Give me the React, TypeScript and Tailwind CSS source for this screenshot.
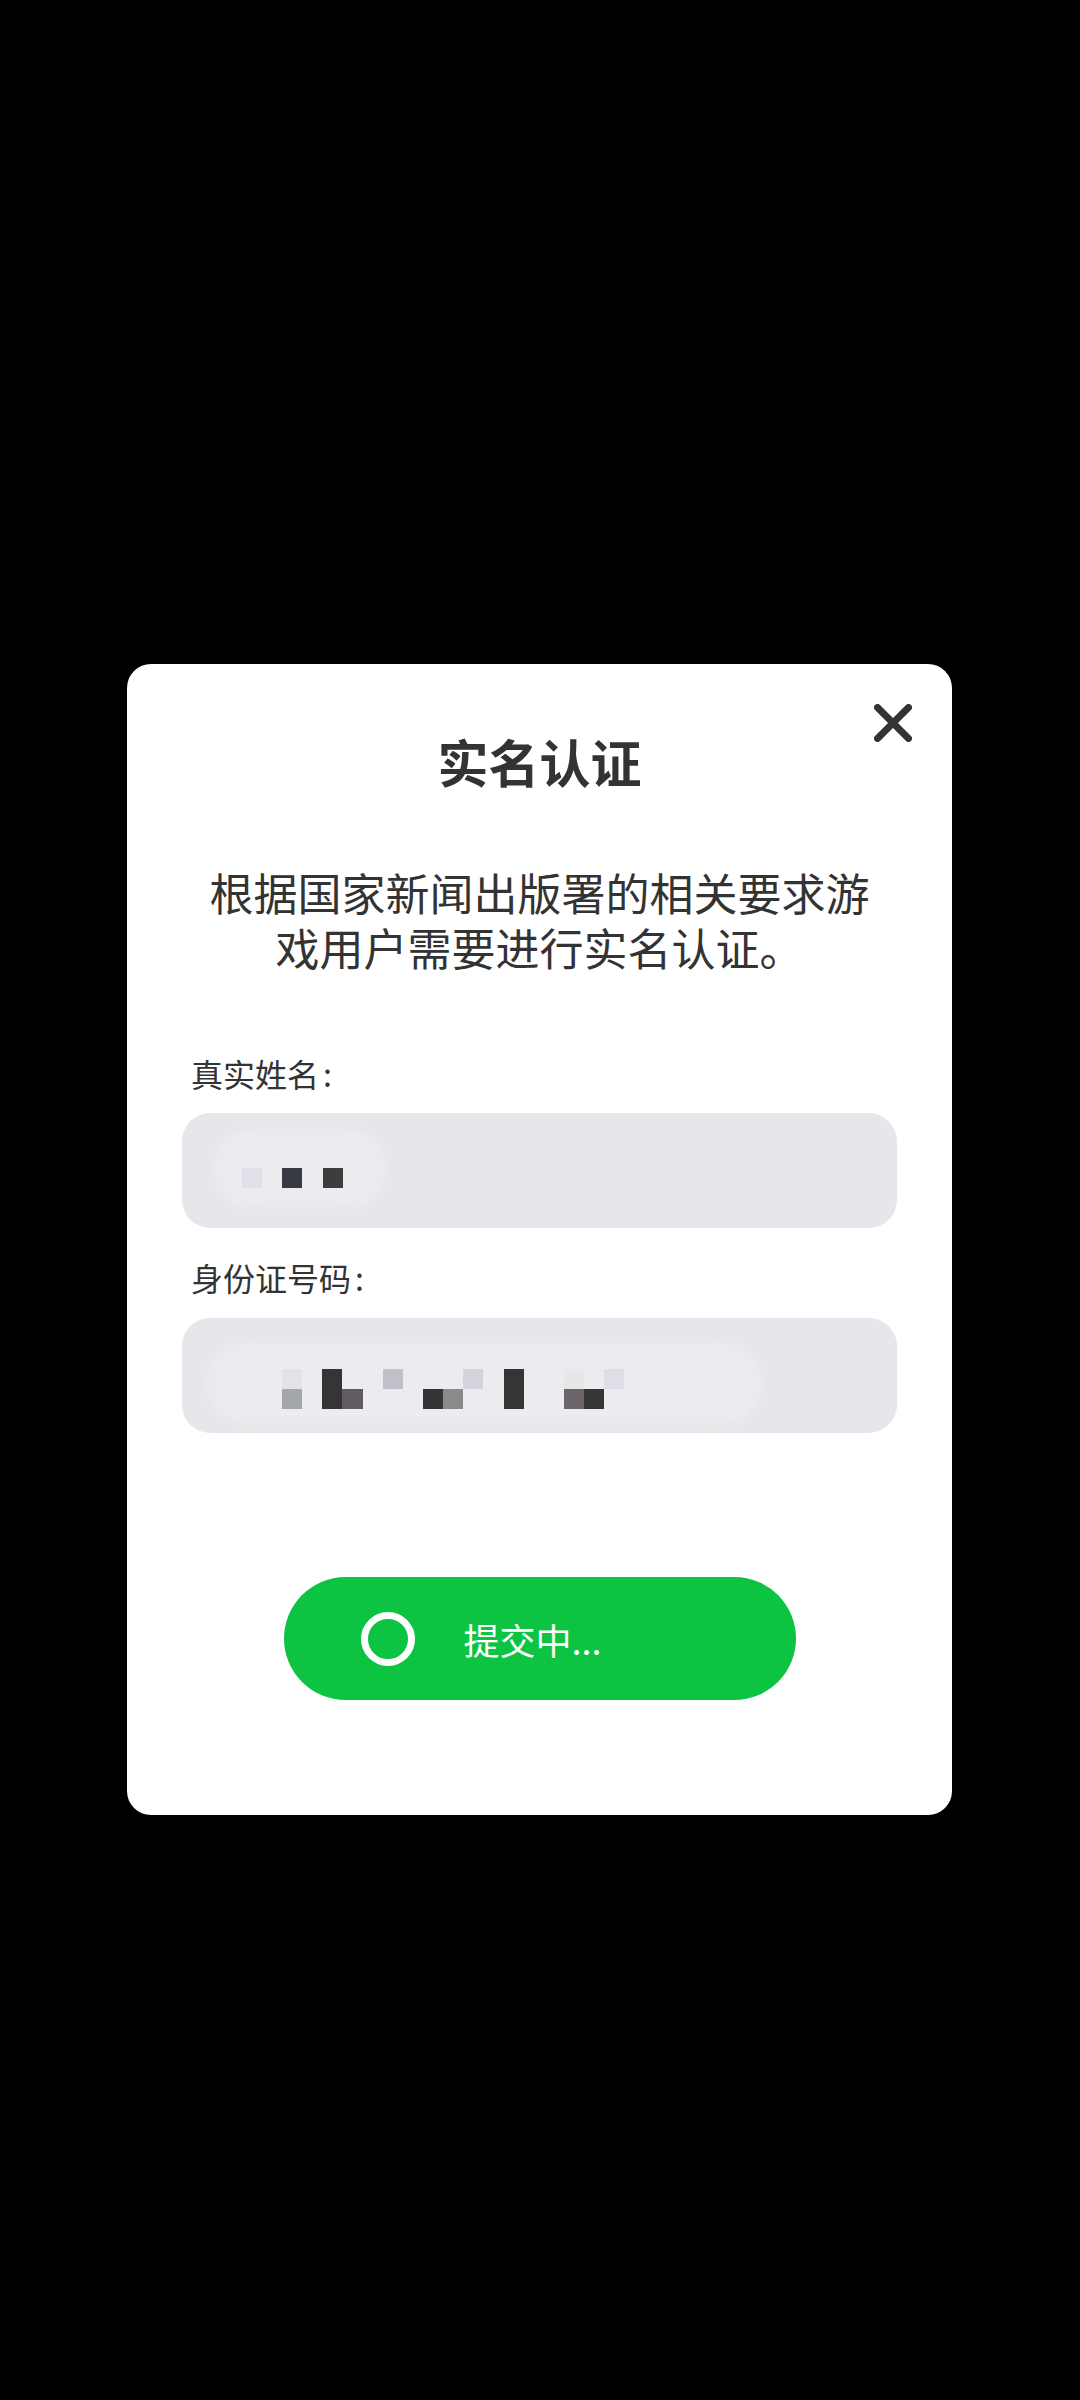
import React from "react";

const FONT = { fontFamily: '"Noto Sans CJK SC", "Noto Sans", sans-serif' };

type Cell = { c: number; r: number; color: string };

const nameCells: Cell[] = [
  { c: 0, r: 0, color: "#e0e0e8" },
  { c: 2, r: 0, color: "#373a42" },
  { c: 4, r: 0, color: "#3d3d3d" },
];

const idCells: Cell[] = [
  { c: 0, r: 0, color: "#e3e3e5" },
  { c: 0, r: 1, color: "#a4a8ab" },
  { c: 2, r: 0, color: "#353535" },
  { c: 2, r: 1, color: "#353535" },
  { c: 3, r: 1, color: "#5f5b60" },
  { c: 5, r: 0, color: "#c0c0c8" },
  { c: 7, r: 1, color: "#363337" },
  { c: 8, r: 1, color: "#8a8a8a" },
  { c: 9, r: 0, color: "#d3d3db" },
  { c: 11, r: 0, color: "#353535" },
  { c: 11, r: 1, color: "#353535" },
  { c: 14, r: 0, color: "#e8e6e6" },
  { c: 14, r: 1, color: "#6b6468" },
  { c: 15, r: 1, color: "#353535" },
  { c: 16, r: 0, color: "#dedee6" },
];

function Mosaic({ cells, cols, rows }: { cells: Cell[]; cols: number; rows: number }) {
  return (
    <div
      className="grid"
      style={{
        gridTemplateColumns: `repeat(${cols}, 20.15px)`,
        gridTemplateRows: `repeat(${rows}, 20px)`,
      }}
    >
      {cells.map((cell, i) => (
        <div
          key={i}
          style={{
            gridColumnStart: cell.c + 1,
            gridRowStart: cell.r + 1,
            backgroundColor: cell.color,
          }}
        />
      ))}
    </div>
  );
}

export default function App() {
  return (
    <div className="min-h-[2400px] w-[1080px] bg-black pt-[664px]" style={FONT}>
      <div className="relative ml-[127px] flex h-[1151px] w-[825px] flex-col rounded-[24px] bg-white">
        {/* close */}
        <button className="absolute left-[747px] top-[40px] h-[38px] w-[38px]">
          <svg width="38" height="38" viewBox="0 0 38 38">
            <path
              d="M3.5 3.5 L34.5 34.5 M34.5 3.5 L3.5 34.5"
              stroke="#333333"
              strokeWidth="7"
              strokeLinecap="round"
            />
          </svg>
        </button>

        <h1 className="mt-[72px] text-center text-[51px] font-bold leading-[51px] text-[#333333]">
          实名认证
        </h1>

        <p className="mx-auto mt-[78px] w-[672px] text-center text-[44px] leading-[55px] text-[#333333]">
          根据国家新闻出版署的相关要求游戏用户需要进行实名认证。
        </p>

        <div className="mt-[82px] pl-[64px] text-[32px] leading-[32px] text-[#333333]">
          真实姓名<span className="ml-[4px]">:</span>
        </div>
        <div className="relative mx-[55px] mt-[24px] h-[115px] overflow-hidden rounded-[28px] bg-[#e7e7eb]">
          <div className="absolute left-[31px] top-[17px] h-[77px] w-[174px] rounded-full bg-[#ececf0] blur-[6px]" />
          <div className="relative pl-[60px] pt-[55px]">
            <Mosaic cells={nameCells} cols={5} rows={1} />
          </div>
        </div>

        <div className="mt-[33px] pl-[64px] text-[32px] leading-[32px] text-[#333333]">
          身份证号码<span className="ml-[4px]">:</span>
        </div>
        <div className="relative mx-[55px] mt-[25px] h-[115px] overflow-hidden rounded-[28px] bg-[#e7e7eb]">
          <div className="absolute left-[25px] top-[24px] h-[82px] w-[555px] rounded-full bg-[#ececf0] blur-[6px]" />
          <div className="relative pl-[100px] pt-[51px]">
            <Mosaic cells={idCells} cols={17} rows={2} />
          </div>
        </div>

        <button className="mx-auto mt-[144px] flex h-[123px] w-[512px] items-center rounded-full bg-[#0cc441] pl-[77px]">
          <svg width="54" height="54" viewBox="0 0 54 54" className="shrink-0">
            <circle cx="27" cy="27" r="23.5" fill="none" stroke="#ffffff" strokeWidth="7" />
          </svg>
          <span className="ml-[49px] text-[36px] leading-[36px] text-white">提交中...</span>
        </button>
      </div>
    </div>
  );
}
